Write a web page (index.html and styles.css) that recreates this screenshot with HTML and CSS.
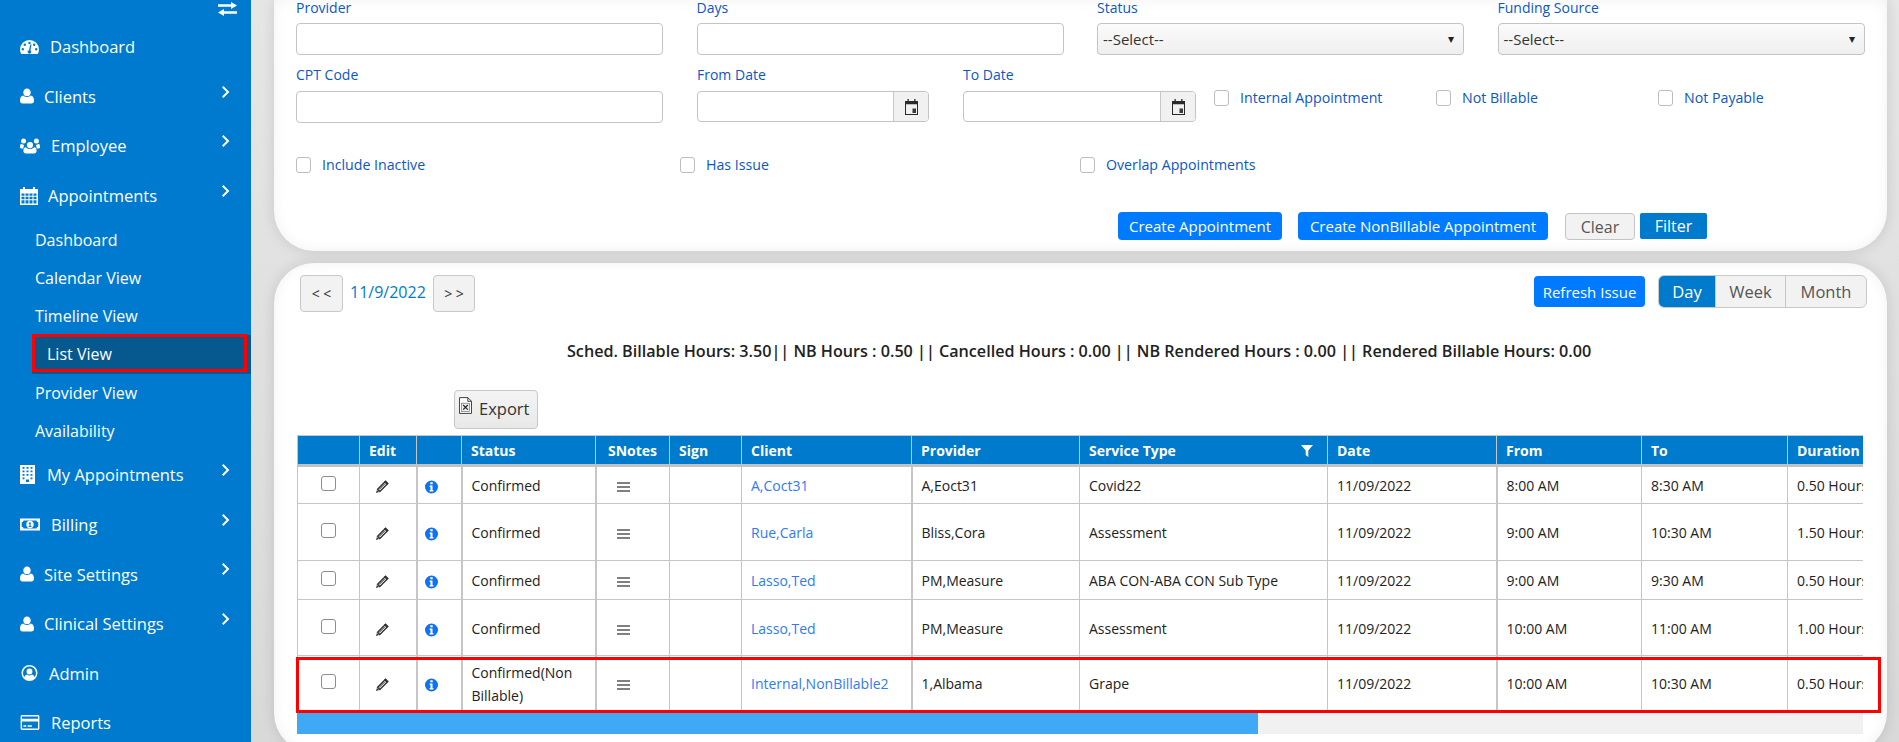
FILE: index.html
```html
<!DOCTYPE html>
<html lang="en">
<head>
<meta charset="utf-8">
<title>Appointments - List View</title>
<link rel="stylesheet" href="styles.css">
</head>
<body>
<svg class="defs" width="0" height="0" aria-hidden="true">
  <symbol id="i-user" viewBox="0 0 14 16"><path d="M7 0.5a3.700 3.700 0 0 1 3.700 3.900 3.700 3.700 0 0 1-7.400 0A3.700 3.700 0 0 1 7 .5zM3.200 7.600C4.200 8.600 5.500 9 7 9s2.800-.4 3.800-1.400c2 .2 3.200 2 3.200 5.200 0 1.800-1 2.700-2.600 2.700H2.600C1 15.500 0 14.600 0 12.800c0-3.200 1.200-5 3.200-5.200z"/></symbol>
  <symbol id="i-pencil" viewBox="0 0 14 14"><path d="M10.600 1.200 12.800 3.400 4.800 11.400 2.600 9.200z" fill="none" stroke="#333" stroke-width="1.400"/><path d="M10.200 .8 13.200 3.800 11.900 5.100 8.900 2.100zM1.900 9.900 4.100 12.100 1 13z" fill="#333"/><path d="M4 9.600 9.800 3.800" stroke="#333"/></symbol>
  <symbol id="i-info" viewBox="0 0 14 14"><path fill-rule="evenodd" d="M7 0a7 7 0 1 1 0 14A7 7 0 0 1 7 0zM5.700 1.900v2.200h2.600V1.900zM5 5.500v1.400h.9v3.300H5v1.700h4v-1.700h-.9V5.500z"/></symbol>
  <symbol id="i-bars" viewBox="0 0 13 10"><path d="M0 0h13v2H0zM0 4h13v2H0zM0 8h13v2H0z"/></symbol>
  <symbol id="i-cal" viewBox="0 0 13 16"><path fill-rule="evenodd" d="M2.500 0h1.300v2h5.400V0h1.300v2H13v14H0V2h2.500zM1 5.200V15h11V5.200z" fill="#2a2a2a"/><path d="M7.500 9.500H11V14H7.500z" fill="#3a3a3a"/></symbol>
  <symbol id="i-chev" viewBox="0 0 8 12"><path d="M1.400 0 7.400 6l-6 6L0 10.600 4.600 6 0 1.400z"/></symbol>
</svg>

<div class="app">
  <aside class="sidebar">
    <div class="toggle">
      <svg class="toggle-icon" viewBox="0 0 19 14"><path d="M13 0l6 3.500L13 7V4.700H0V2.300h13zM6 7v2.300h13v2.400H6V14L0 10.500z"/></svg>
    </div>
    <ul class="nav">
      <li class="nav-item"><svg class="ico ico-w19" viewBox="0 0 19 14"><path fill-rule="evenodd" d="M9.500 0A9.500 9.500 0 0 1 19 9.500c0 1.800-.5 3.300-1.300 4.500H1.300A8.800 8.800 0 0 1 0 9.500 9.500 9.500 0 0 1 9.500 0zM9.500 1.800a1.200 1.200 0 1 0 0 2.400 1.200 1.200 0 0 0 0-2.400zM4.800 3.500a1.200 1.200 0 1 0 0 2.400 1.200 1.200 0 0 0 0-2.400zM14.200 3.500a1.200 1.200 0 1 0 0 2.400 1.200 1.200 0 0 0 0-2.400zM2.800 8a1.200 1.200 0 1 0 0 2.400 1.200 1.200 0 0 0 0-2.400zM16.200 8a1.200 1.200 0 1 0 0 2.400 1.200 1.200 0 0 0 0-2.400zM10.300 4.500 9 10.200a1.700 1.700 0 1 0 1.500.3l1-6z"/></svg><span class="t-50">Dashboard</span></li>
      <li class="nav-item"><svg class="ico ico-w14"><use href="#i-user"/></svg><span class="t-44">Clients</span><svg class="chev"><use href="#i-chev"/></svg></li>
      <li class="nav-item"><svg class="ico ico-w20 ico-tall" viewBox="0 0 20 16"><path d="M10 4.500a3.100 3.100 0 1 1 0 6.200 3.100 3.100 0 0 1 0-6.200zM3.600 1a2.500 2.500 0 1 1 0 5 2.500 2.500 0 0 1 0-5zM16.400 1a2.500 2.500 0 1 1 0 5 2.500 2.500 0 0 1 0-5zM5.800 9.800c1 1.200 2.500 1.800 4.200 1.800s3.200-.6 4.200-1.800c1.700.2 2.400 1.600 2.400 3.500 0 1.700-1 2.700-2.500 2.700H5.900c-1.500 0-2.500-1-2.500-2.700 0-1.900.7-3.300 2.400-3.500zM1.200 6.300c.8.700 1.600 1 2.500 1l.3.900A4.700 4.700 0 0 0 3.400 11H1.200C.3 11 0 10.300 0 9.300c0-1.400.3-2.600 1.200-3zM18.800 6.300c.9.400 1.200 1.600 1.200 3 0 1-.3 1.700-1.200 1.700h-2.200a4.700 4.700 0 0 0-.6-2.800l.3-.9c.9 0 1.700-.3 2.500-1z"/></svg><span class="t-51">Employee</span><svg class="chev"><use href="#i-chev"/></svg></li>
      <li class="nav-item"><svg class="ico ico-w18" viewBox="0 0 18 18"><path fill-rule="evenodd" d="M3 0h2v2h8V0h2v2h3v16H0V2h3zM1.500 6.500v2.300h3V6.500zM5.500 6.500v2.300h3V6.500zM9.500 6.500v2.300h3V6.500zM13.500 6.500v2.300h3V6.500zM1.500 9.800v2.400h3V9.800zM5.500 9.800v2.400h3V9.800zM9.500 9.800v2.400h3V9.800zM13.500 9.800v2.400h3V9.800zM1.500 13.200v3.200h3v-3.200zM5.500 13.200v3.200h3v-3.200zM9.500 13.200v3.200h3v-3.200zM13.500 13.200v3.200h3v-3.200z"/></svg><span class="t-48">Appointments</span><svg class="chev"><use href="#i-chev"/></svg></li>
      <li class="sub-item">Dashboard</li>
      <li class="sub-item">Calendar View</li>
      <li class="sub-item">Timeline View</li>
      <li class="sub-item active">List View</li>
      <li class="sub-item">Provider View</li>
      <li class="sub-item">Availability</li>
      <li class="nav-item"><svg class="ico ico-w15" viewBox="0 0 15 19"><path fill-rule="evenodd" d="M0 0h15v19H0zM2.500 2v1.800h2V2zM6.500 2v1.800h2V2zM10.500 2v1.800h2V2zM2.500 5.500v1.800h2V5.500zM6.500 5.500v1.800h2V5.500zM10.500 5.500v1.800h2V5.500zM2.500 9v1.800h2V9zM6.500 9v1.800h2V9zM10.500 9v1.800h2V9zM2.500 12.500v1.800h2v-1.800zM10.500 12.500v1.800h2v-1.800zM6 14.500V17h3v-2.500z"/></svg><span class="t-47">My Appointments</span><svg class="chev"><use href="#i-chev"/></svg></li>
      <li class="nav-item"><svg class="ico ico-w20" viewBox="0 0 20 12"><path fill-rule="evenodd" d="M0 0h20v12H0zM3.500 2A1.800 1.800 0 0 1 1.700 3.800v4.400A1.800 1.800 0 0 1 3.500 10h13a1.800 1.800 0 0 1 1.800-1.800V3.800A1.800 1.800 0 0 1 16.500 2zM10 2.300a3.700 3.700 0 1 1 0 7.400 3.700 3.700 0 0 1 0-7.400zM9.800 3.700 8.400 5l.7.700.4-.4v2.300H8.600v1h2.800v-1h-.8V3.700z"/></svg><span class="t-51">Billing</span><svg class="chev"><use href="#i-chev"/></svg></li>
      <li class="nav-item"><svg class="ico ico-w14"><use href="#i-user"/></svg><span class="t-44">Site Settings</span><svg class="chev"><use href="#i-chev"/></svg></li>
      <li class="nav-item"><svg class="ico ico-w14"><use href="#i-user"/></svg><span class="t-44">Clinical Settings</span><svg class="chev"><use href="#i-chev"/></svg></li>
      <li class="nav-item"><svg class="ico ico-w19" viewBox="0 0 19 18"><path fill-rule="evenodd" d="M9.500 0a9 9 0 1 1 0 18 9 9 0 0 1 0-18zM9.500 1.800a7.200 7.200 0 0 0-5.700 11.600c.7-1.700 1.800-2.500 3-2.700.7.600 1.600 1 2.700 1s2-.4 2.700-1c1.200.2 2.300 1 3 2.700A7.200 7.200 0 0 0 9.500 1.800zM9.500 4a3.300 3.300 0 1 1 0 6.600 3.300 3.300 0 0 1 0-6.600z"/></svg><span class="t-49">Admin</span></li>
      <li class="nav-item"><svg class="ico ico-w20" viewBox="0 0 20 16"><path fill-rule="evenodd" d="M1.500 0h17A1.500 1.500 0 0 1 20 1.500v13a1.500 1.500 0 0 1-1.500 1.500h-17A1.500 1.500 0 0 1 0 14.500v-13A1.500 1.500 0 0 1 1.500 0zM1.500 1.500V4h17V1.500zM1.500 7v7.500h17V7zM3 11h3v1.500H3zM7.500 11H12v1.500H7.500z"/></svg><span class="t-51">Reports</span></li>
    </ul>
  </aside>

  <main class="main">
    <section class="card filters">
      <div class="row row-four">
        <div class="field"><label class="lbl">Provider</label><div class="input"></div></div>
        <div class="field"><label class="lbl">Days</label><div class="input"></div></div>
        <div class="field"><label class="lbl">Status</label><div class="select">--Select--<span class="caret">&#9662;</span></div></div>
        <div class="field"><label class="lbl">Funding Source</label><div class="select">--Select--<span class="caret">&#9662;</span></div></div>
      </div>
      <div class="row row-second">
        <div class="field f-cpt"><label class="lbl">CPT Code</label><div class="input"></div></div>
        <div class="field f-from"><label class="lbl">From Date</label><div class="date"><span class="date-in"></span><span class="addon"><svg class="cal"><use href="#i-cal"/></svg></span></div></div>
        <div class="field f-to"><label class="lbl">To Date</label><div class="date"><span class="date-in"></span><span class="addon"><svg class="cal"><use href="#i-cal"/></svg></span></div></div>
        <div class="checks-top">
          <label class="chk c-222"><span class="box"></span>Internal Appointment</label>
          <label class="chk c-222"><span class="box"></span>Not Billable</label>
          <label class="chk"><span class="box"></span>Not Payable</label>
        </div>
      </div>
      <div class="row row-third">
        <label class="chk c-384"><span class="box"></span>Include Inactive</label>
        <label class="chk c-400"><span class="box"></span>Has Issue</label>
        <label class="chk"><span class="box"></span>Overlap Appointments</label>
      </div>
      <div class="row row-actions">
        <button class="btn btn-primary">Create Appointment</button>
        <button class="btn btn-primary b-wide">Create NonBillable Appointment</button>
        <button class="btn btn-clear">Clear</button>
        <button class="btn btn-filter">Filter</button>
      </div>
    </section>

    <section class="card results">
      <div class="toolbar">
        <div class="pager">
          <button class="btn-nav">&lt; &lt;</button>
          <span class="cur-date">11/9/2022</span>
          <button class="btn-nav">&gt; &gt;</button>
        </div>
        <div class="tools">
          <button class="btn btn-primary b-refresh">Refresh Issue</button>
          <div class="seg">
            <span class="seg-item on">Day</span>
            <span class="seg-item">Week</span>
            <span class="seg-item">Month</span>
          </div>
        </div>
      </div>
      <p class="summary">Sched. Billable Hours: 3.50|| NB Hours : 0.50 || Cancelled Hours : 0.00 || NB Rendered Hours : 0.00 || Rendered Billable Hours: 0.00</p>
      <button class="btn-export"><svg class="xl" viewBox="0 0 14 18"><path d="M.5.500h9l4 4v13H.5z" fill="#fff" stroke="#333"/><path d="M9.500.500v4h4" fill="none" stroke="#333"/><rect x="2.500" y="6.500" width="9" height="9" fill="#eee" stroke="#555" stroke-width=".6"/><path d="M4.500 8.500l5 5M9.500 8.500l-5 5" stroke="#222" stroke-width="1.300"/></svg>Export</button>

      <div class="table-box">
        <div class="table-clip">
          <table class="grid">
            <colgroup>
              <col class="c1"><col class="c2"><col class="c3"><col class="c4"><col class="c5"><col class="c6"><col class="c7"><col class="c8"><col class="c9"><col class="c10"><col class="c11"><col class="c12"><col class="c13">
            </colgroup>
            <thead>
              <tr><th></th><th>Edit</th><th></th><th>Status</th><th class="center">SNotes</th><th>Sign</th><th>Client</th><th>Provider</th><th class="th-filter">Service Type<svg class="funnel" viewBox="0 0 12 12"><path d="M0 0h12L7.300 5.500V12L4.700 10V5.500z"/></svg></th><th>Date</th><th>From</th><th>To</th><th>Duration</th></tr>
            </thead>
            <tbody>
              <tr class="r1"><td class="center"><span class="box box-lg"></span></td><td class="center ic-pen"><svg class="pen"><use href="#i-pencil"/></svg></td><td class="center ic-info"><svg class="info"><use href="#i-info"/></svg></td><td>Confirmed</td><td class="center ic-bars"><svg class="bars"><use href="#i-bars"/></svg></td><td></td><td class="link">A,Coct31</td><td>A,Eoct31</td><td>Covid22</td><td>11/09/2022</td><td>8:00 AM</td><td>8:30 AM</td><td>0.50 Hours</td></tr>
              <tr class="r2"><td class="center"><span class="box box-lg"></span></td><td class="center ic-pen"><svg class="pen"><use href="#i-pencil"/></svg></td><td class="center ic-info"><svg class="info"><use href="#i-info"/></svg></td><td>Confirmed</td><td class="center ic-bars"><svg class="bars"><use href="#i-bars"/></svg></td><td></td><td class="link">Rue,Carla</td><td>Bliss,Cora</td><td>Assessment</td><td>11/09/2022</td><td>9:00 AM</td><td>10:30 AM</td><td>1.50 Hours</td></tr>
              <tr class="r3"><td class="center"><span class="box box-lg"></span></td><td class="center ic-pen"><svg class="pen"><use href="#i-pencil"/></svg></td><td class="center ic-info"><svg class="info"><use href="#i-info"/></svg></td><td>Confirmed</td><td class="center ic-bars"><svg class="bars"><use href="#i-bars"/></svg></td><td></td><td class="link">Lasso,Ted</td><td>PM,Measure</td><td>ABA CON-ABA CON Sub Type</td><td>11/09/2022</td><td>9:00 AM</td><td>9:30 AM</td><td>0.50 Hours</td></tr>
              <tr class="r4"><td class="center"><span class="box box-lg"></span></td><td class="center ic-pen"><svg class="pen"><use href="#i-pencil"/></svg></td><td class="center ic-info"><svg class="info"><use href="#i-info"/></svg></td><td>Confirmed</td><td class="center ic-bars"><svg class="bars"><use href="#i-bars"/></svg></td><td></td><td class="link">Lasso,Ted</td><td>PM,Measure</td><td>Assessment</td><td>11/09/2022</td><td>10:00 AM</td><td>11:00 AM</td><td>1.00 Hours</td></tr>
              <tr class="r5"><td class="center"><span class="box box-lg"></span></td><td class="center ic-pen"><svg class="pen"><use href="#i-pencil"/></svg></td><td class="center ic-info"><svg class="info"><use href="#i-info"/></svg></td><td class="wrap">Confirmed(Non Billable)</td><td class="center ic-bars"><svg class="bars"><use href="#i-bars"/></svg></td><td></td><td class="link">Internal,NonBillable2</td><td>1,Albama</td><td>Grape</td><td>11/09/2022</td><td>10:00 AM</td><td>10:30 AM</td><td>0.50 Hours</td></tr>
            </tbody>
          </table>
          <div class="hscroll"><div class="hthumb"></div></div>
        </div>
        <div class="row-mark"></div>
      </div>
    </section>
  </main>
</div>
</body>
</html>
```

FILE: styles.css
```css
* { box-sizing: border-box; }
html, body { margin: 0; height: 100%; overflow: hidden; }
body { font-family: "Open Sans", "Noto Sans", sans-serif; background: #efefef; color: #212529; font-size: 14px; }
.defs { position: absolute; }
.app { display: flex; height: 742px; overflow: hidden; }

/* Sidebar */
.sidebar { width: 251px; flex: none; background: #007acf; color: #fff; overflow: hidden; }
.toggle { height: 22px; display: flex; justify-content: flex-end; padding: 2px 14px 0 0; }
.toggle-icon { width: 19px; height: 14px; fill: #fff; }
.nav { list-style: none; margin: 0; padding: 0; }
.nav-item { height: 49.6px; display: flex; align-items: center; padding-left: 20px; position: relative; font-size: 16.500px; white-space: nowrap; }
.ico { fill: #fff; flex: none; }
.ico-w14 { width: 14px; height: 16px; }
.ico-w15 { width: 15px; height: 19px; }
.ico-w18 { width: 18px; height: 18px; }
.ico-w19 { width: 19px; height: 16px; }
.ico-w20 { width: 20px; height: 15px; }
.ico-w20.ico-tall { height: 17px; }
.t-44 { margin-left: 10px; }
.t-47 { margin-left: 12px; }
.t-48 { margin-left: 10px; }
.t-49 { margin-left: 10px; }
.t-50 { margin-left: 11px; }
.t-51 { margin-left: 11px; }
.chev { position: absolute; left: 222px; top: 14px; width: 8px; height: 12px; fill: #fff; }
.sub-item { height: 38.300px; display: flex; align-items: center; padding-left: 35px; font-size: 16px; white-space: nowrap; }
.sub-item.active { margin-left: 32px; padding-left: 15px; background: #05598f; position: relative; }
.sub-item.active::after { content: ""; position: absolute; left: 0; right: 4px; top: -1px; bottom: 2px; border: 3px solid #f00; }

/* Main */
.main { flex: 1; min-width: 0; padding: 0 12px 0 23px; background: linear-gradient(#e6e6e6, #d9d9d9); }
.card { background: #fff; box-shadow: 0 0 14px rgba(0,0,0,.12), inset 0 0 14px rgba(0,0,0,.06); }
.filters { height: 251px; padding: 0 23px 0 22px; border-radius: 0 0 40px 40px; color: #0b57c4; }
.results { height: 490px; margin-top: 12px; padding: 12px 22px 0 23px; border-radius: 40px; }

.row { display: flex; }
.lbl { display: block; height: 16px; line-height: 16px; margin-bottom: 7px; font-size: 14px; color: #0b57c4; white-space: nowrap; }
.row-four { gap: 33.500px; }
.row-four .field { width: 367px; flex: none; }
.input { height: 32px; border: 1px solid #c4c4c4; border-radius: 4px; background: #fff; }
.select { height: 32px; border: 1px solid #c4c4c4; border-radius: 4px; background: linear-gradient(#fbfbfb, #efefef); color: #333; font-size: 15px; line-height: 30px; padding-left: 5px; position: relative; }
.caret { position: absolute; right: 9px; top: 0; font-size: 12px; color: #222; }
.row-second { margin-top: 12px; }
.f-cpt { width: 367px; margin-right: 34px; }
.f-cpt .lbl, .f-from .lbl, .f-to .lbl { margin-bottom: 8px; }
.f-from { width: 232px; margin-right: 34px; }
.f-to { width: 233px; margin-right: 18px; }
.date { height: 31px; display: flex; border: 1px solid #c4c4c4; border-radius: 4px; overflow: hidden; }
.date-in { flex: 1; }
.addon { width: 35px; background: #f1f1f1; border-left: 1px solid #c8c8c8; display: flex; align-items: center; justify-content: center; }
.cal { width: 13px; height: 16px; }
.checks-top { display: flex; padding-top: 23px; }
.chk { display: flex; align-items: flex-start; height: 16px; font-size: 14.200px; line-height: 16px; color: #0b57c4; white-space: nowrap; }
.box { display: inline-block; width: 15px; height: 16px; border: 1px solid #bdbdbd; border-radius: 3px; background: #fff; margin-right: 11px; flex: none; }
.c-222 { width: 222px; }
.c-384 { width: 384px; }
.c-400 { width: 400px; }
.row-third { margin-top: 34px; }
.row-actions { margin-top: 39px; justify-content: flex-end; padding-right: 157px; align-items: flex-start; }
.btn { font-family: inherit; border: 0; cursor: pointer; }
.btn-primary { height: 28px; padding: 0; width: 164px; background: #007bff; color: #fff; border-radius: 4px; font-size: 15px; margin-right: 16px; white-space: nowrap; }
.b-wide { width: 250px; margin-right: 17px; }
.btn-clear { width: 70px; height: 27px; margin-top: 1px; background: #f2f2f2; border: 1px solid #c4c4c4; border-radius: 4px; color: #555; font-size: 16px; margin-right: 5px; padding: 0; }
.btn-filter { width: 67px; height: 26px; margin-top: 1px; background: #007acc; color: #fff; border-radius: 2px; font-size: 16px; padding: 0; }

/* Results */
.toolbar { display: flex; justify-content: space-between; height: 37px; padding: 0 0 0 3px; }
.pager { display: flex; align-items: flex-start; }
.btn-nav { width: 43px; height: 37px; background: #f2f2f2; border: 1px solid #c8c8c8; border-radius: 4px; color: #333; font-family: inherit; font-size: 14px; padding: 0; }
.btn-nav:last-child { width: 42px; }
.cur-date { width: 90px; padding-left: 7px; line-height: 34px; color: #007acc; font-size: 16px; }
.tools { display: flex; align-items: flex-start; margin-right: -2px; }
.b-refresh { width: 111px; height: 31px; margin: 1px 13px 0 0; font-size: 15px; }
.seg { display: flex; height: 33px; border: 1px solid #c8c8c8; border-radius: 6px; overflow: hidden; background: #f2f2f2; font-size: 16.500px; line-height: 31px; color: #555; }
.seg-item { text-align: center; width: 70px; border-left: 1px solid #c8c8c8; }
.seg-item.on { width: 56px; border-left: 0; background: #007acc; color: #fff; }
.seg-item:last-child { width: 81px; }
.summary { margin: 28px 0 0; height: 22px; line-height: 22px; font-size: 16.150px; font-weight: 600; color: #222; padding-left: 270px; white-space: nowrap; }
.btn-export { display: flex; align-items: center; margin: 28px 0 6px 157px; width: 84px; height: 39px; padding: 0 0 3px 4px; background: linear-gradient(#f4f4f4, #e8e8e8); border: 1px solid #c8c8c8; border-radius: 4px; font-family: inherit; font-size: 16.500px; color: #333; }
.xl { width: 13px; height: 17px; margin: -6px 7px 0 0; }

.table-box { position: relative; width: 1566px; }
.table-clip { overflow: hidden; }
.grid { border-collapse: collapse; table-layout: fixed; width: 1590px; font-size: 14px; color: #222; }
.c1 { width: 62px; } .c2 { width: 57px; } .c3 { width: 45px; } .c4 { width: 134px; }
.c5 { width: 74px; } .c6 { width: 72px; } .c7 { width: 170px; } .c8 { width: 168px; }
.c9 { width: 248px; } .c10 { width: 169px; } .c11 { width: 145px; } .c12 { width: 146px; } .c13 { width: 100px; }
.grid th { height: 30px; background: #007acc; color: #fff; font-weight: 700; text-align: left; padding: 0 9px; border: 1px solid #c6c6c6; border-bottom: 3px solid #c2c2c2; font-size: 14px; white-space: nowrap; }
.grid td { padding: 1px 9px 0; border: 1px solid #c6c6c6; line-height: 23px; white-space: nowrap; }
.grid td.wrap { white-space: normal; }
.grid td:nth-child(3), .grid td:nth-child(4), .grid td:nth-child(5), .grid td:nth-child(8), .grid td:nth-child(11) { border-left-width: 2px; }
.grid .center { text-align: center; padding: 0; }
.grid td.center { padding-top: 1px; }
.grid td.ic-pen { padding-right: 12px; }
.grid td.ic-info { padding-right: 15px; }
.grid td.ic-bars { padding-right: 18px; }
.grid .link { color: #2f7bf2; }
.th-filter { position: relative; }
.funnel { position: absolute; right: 14px; top: 9px; width: 12px; height: 12px; fill: #fff; }
.r1 { height: 38px; } .r2 { height: 57px; } .r3 { height: 39px; } .r4 { height: 56px; } .r5 { height: 55px; }
.box-lg { width: 15px; height: 15px; margin: 0 0 6px; vertical-align: middle; border-color: #8d8d8d; }
.pen { width: 14px; height: 14px; vertical-align: middle; }
.info { width: 13px; height: 14px; fill: #0f72ee; vertical-align: middle; }
.bars { width: 13px; height: 10px; fill: #808080; vertical-align: middle; }
.hscroll { height: 22px; background: #f1f1f1; margin-top: 1px; }
.hthumb { width: 961px; height: 100%; background: #3fa9f5; }
.row-mark { position: absolute; left: -1px; right: -18px; top: 222px; height: 56px; border: 3px solid #f00; }
```
